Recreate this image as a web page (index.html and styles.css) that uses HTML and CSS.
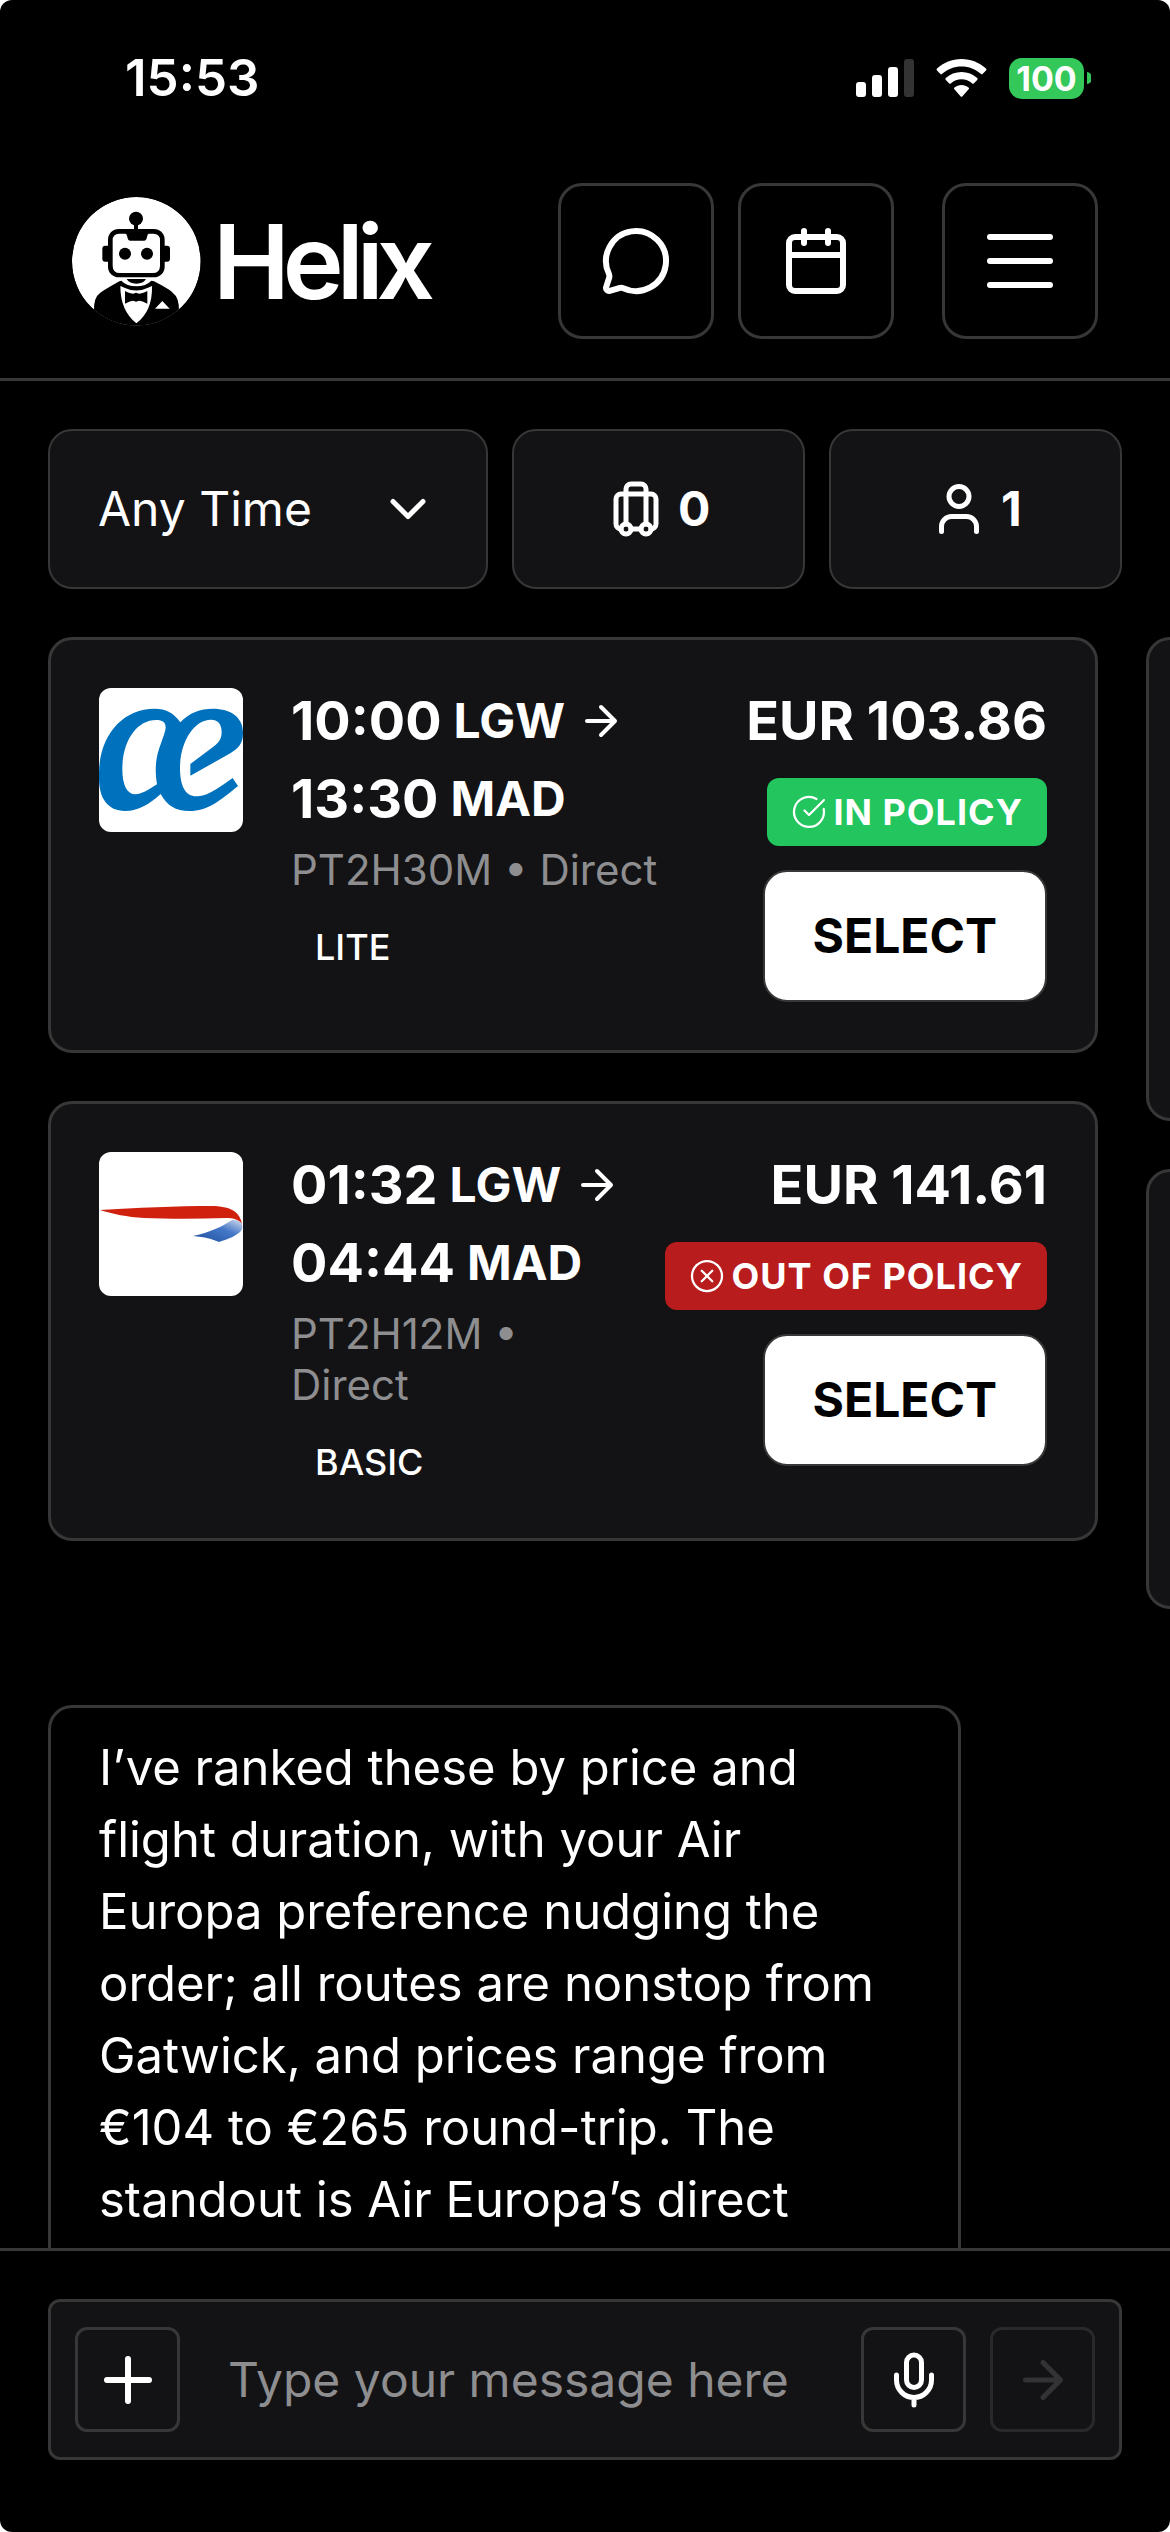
FILE: index.html
```html
<!DOCTYPE html>
<html lang="en">
<head>
<meta charset="utf-8">
<meta name="viewport" content="width=device-width, initial-scale=1">
<title>Helix</title>
<link rel="stylesheet" href="styles.css">
</head>
<body>
<div class="app">
  <div class="status">
    <span class="status-time">15:53</span>
    <div class="status-icons">
      <svg width="58" height="38" viewBox="0 0 58 38" aria-hidden="true">
        <rect x="0" y="23" width="10" height="15" rx="3" fill="#fff"/>
        <rect x="16" y="16" width="10" height="22" rx="3" fill="#fff"/>
        <rect x="32" y="8" width="10" height="30" rx="3" fill="#fff"/>
        <rect x="48" y="0" width="10" height="38" rx="3" fill="#333"/>
      </svg>
      <svg width="51" height="38" viewBox="0 0 51 38" fill="#fff" aria-hidden="true">
        <path d="M25.500 0C35 0 43.500 3.600 50 9.500q1 1 0 2l-3.200 3.300q-1 1-2 0C39.500 10 33 7.400 25.500 7.400S11.500 10 6.200 14.800q-1 1-2 0L1 11.500q-1-1 0-2C7.500 3.600 16 0 25.500 0z"/>
        <path d="M25.500 13c6 0 11.500 2.300 15.700 6q1 1 0 2L38 24.300q-1 1-2 0c-3-2.500-6.500-4-10.500-4s-7.500 1.500-10.500 4q-1 1-2 0L9.800 21q-1-1 0-2c4.200-3.700 9.700-6 15.700-6z"/>
        <path d="M25.500 26c2.700 0 5 .9 7 2.400q1 .9.100 1.900L26.500 37.200q-1 1-2 0l-6.100-6.900q-.9-1 .1-1.900c2-1.500 4.300-2.400 7-2.400z"/>
      </svg>
      <div class="battery"><span class="battery-level">100</span><svg width="4" height="12" viewBox="0 0 4 12" aria-hidden="true"><path d="M0 0a5 6 0 0 1 0 12z" fill="#34c759"/></svg></div>
    </div>
  </div>

  <header class="topbar">
    <a class="brand" href="#">
      <svg width="129" height="129" viewBox="18 18 387 387" aria-hidden="true">
        <clipPath id="disc"><circle cx="211" cy="211" r="193"/></clipPath>
        <g clip-path="url(#disc)">
          <circle cx="211" cy="211" r="193" fill="#fff"/>
          <circle cx="210" cy="83" r="21"/>
          <path d="M204 98h12v20h-12z"/>
          <rect x="109" y="164" width="30" height="48" rx="9"/>
          <rect x="283" y="164" width="29" height="48" rx="9"/>
          <rect x="126" y="114" width="170" height="145" rx="32"/>
          <path d="M160 128h18q4 0 5 6l2 8q1 7 7 7h43q6 0 7-7l2-8q1-6 5-6h13q20 0 20 20v76q0 22-22 22H162q-22 0-22-22v-76q0-20 20-20z" fill="#fff"/>
          <circle cx="177" cy="188" r="18"/><circle cx="243" cy="188" r="18"/>
          <path d="M182 264h58q-8 14-29 14t-29-14z"/>
          <path d="M84 362q-2-42 18-56 12-9 58-35l6-2q16 17 45 17t45-17l8 2q48 25 56 34 20 14 19 56v44H84z"/>
          <path d="M163 285l12 5q36 17 71 0l12-5q2 75-47 112-48-38-48-112z" fill="#fff"/>
          <path d="M177 300q16 8 25 8l8-3 9 3q9 0 25-8v38q-16-9-25-9l-9 3-8-3q-9 0-25 9z"/>
          <path d="M267 353l22-23 22 23z" fill="#fff"/>
        </g>
      </svg>
      <span class="brand-name">Helix</span>
    </a>
    <nav class="actions">
      <button class="icon-btn" type="button" aria-label="Chat">
        <svg class="icon icon-lg" viewBox="0 0 24 24"><path d="M2.992 16.342a2 2 0 0 1 .094 1.167l-1.065 3.290a1 1 0 0 0 1.236 1.168l3.413-.998a2 2 0 0 1 1.099.092 10 10 0 1 0-4.777-4.719"/></svg>
      </button>
      <button class="icon-btn" type="button" aria-label="Calendar">
        <svg class="icon icon-lg" viewBox="0 0 24 24"><path d="M8 2v4M16 2v4M3 10h18"/><rect x="3" y="4" width="18" height="18" rx="2"/></svg>
      </button>
      <button class="icon-btn menu-btn" type="button" aria-label="Menu">
        <svg class="icon icon-lg" viewBox="0 0 24 24"><path d="M2 4h20M2 12h20M2 20h20"/></svg>
      </button>
    </nav>
  </header>

  <main class="content">
    <div class="filters">
      <div class="select-wrap">
        <select class="filter" aria-label="Departure time"><option>Any Time</option></select>
        <svg class="icon icon-md chevron" viewBox="0 0 24 24"><path d="m6 9 6 6 6-6"/></svg>
      </div>
      <button class="filter count" type="button" aria-label="Bags">
        <svg class="icon icon-md" viewBox="0 0 24 24"><path d="M6 20a2 2 0 0 1-2-2V8a2 2 0 0 1 2-2h12a2 2 0 0 1 2 2v10a2 2 0 0 1-2 2"/><path d="M8 18V4a2 2 0 0 1 2-2h4a2 2 0 0 1 2 2v14M10 20h4"/><circle cx="16" cy="20" r="2"/><circle cx="8" cy="20" r="2"/></svg>
        <span>0</span>
      </button>
      <button class="filter count" type="button" aria-label="Passengers">
        <svg class="icon icon-md" viewBox="0 0 24 24"><path d="M19 21v-2a4 4 0 0 0-4-4H9a4 4 0 0 0-4 4v2"/><circle cx="12" cy="7" r="4"/></svg>
        <span>1</span>
      </button>
    </div>

    <div class="results">
      <div class="column">
        <article class="card">
          <svg class="airline" viewBox="9 9 432 432" role="img" aria-label="Air Europa">
            <path fill="#0071bc" fill-rule="evenodd" d="M9 262C11 150 80 71 176 71c33 0 57 12 77 41 27-29 60-41 97-41 55 0 91 26 91 72 0 34-14 45-38 62L283 272v-35l64-48c20-14 30-26 30-48 0-25-12-37-32-37-52 0-93 68-93 145 0 55 17 85 49 85 29 0 55-16 109-55l16 24C370 348 335 378 281 378c-43 0-68-16-87-51-35 31-66 51-107 51C35 378 9 340 9 280zM181 105c-60 0-102 65-102 147 0 48 14 76 39 76 18 0 38-13 65-30-8-50-3-84 12-123 8-23 14-38 14-48 0-15-10-22-28-22z"/>
          </svg>
          <div class="trip">
            <div class="legs">
              <div class="leg"><b>10:00</b> <span>LGW</span><svg class="icon icon-sm" viewBox="0 0 24 24"><path d="M5 12h14M12 5l7 7-7 7"/></svg></div>
              <div class="leg"><b>13:30</b> <span>MAD</span></div>
            </div>
            <p class="detail">PT2H30M • Direct</p>
            <span class="fare">LITE</span>
          </div>
          <div class="offer">
            <div class="price">EUR 103.86</div>
            <div class="policy policy-in"><svg class="icon icon-xs" viewBox="0 0 24 24"><path d="M21.800 10A10 10 0 1 1 17 3.300M9 11l3 3L22 4"/></svg>IN POLICY</div>
            <button class="select-btn" type="button">SELECT</button>
          </div>
        </article>
        <article class="card">
          <svg class="airline" viewBox="0 0 144 144" role="img" aria-label="British Airways">
            <linearGradient id="ribbon" x1="1" y1="0" x2="0" y2="1"><stop offset="0" stop-color="#d5dcec"/><stop offset=".4" stop-color="#4478c8"/><stop offset="1" stop-color="#1f4f9e"/></linearGradient>
            <path fill="#d0210f" d="M1 58C35 56 80 54 112 54c20 0 29 6 31 18-4-5-9-6-16-6-28 1-58 1-82 0C28 65 14 62 1 58z"/>
            <path fill="url(#ribbon)" d="M94 84c18-4 30-10 39-16 6 0 9 2 10 4 1 3 0 6-2 8-5 4-11 7-21 10-7-3-14-5-26-6z"/>
          </svg>
          <div class="trip">
            <div class="legs">
              <div class="leg"><b>01:32</b> <span>LGW</span><svg class="icon icon-sm" viewBox="0 0 24 24"><path d="M5 12h14M12 5l7 7-7 7"/></svg></div>
              <div class="leg"><b>04:44</b> <span>MAD</span></div>
            </div>
            <p class="detail">PT2H12M • Direct</p>
            <span class="fare">BASIC</span>
          </div>
          <div class="offer">
            <div class="price">EUR 141.61</div>
            <div class="policy policy-out"><svg class="icon icon-xs" viewBox="0 0 24 24"><circle cx="12" cy="12" r="10"/><path d="m15.500 8.500-7 7M8.500 8.500l7 7"/></svg>OUT OF POLICY</div>
            <button class="select-btn" type="button">SELECT</button>
          </div>
        </article>
      </div>
      <div class="column column-next">
        <article class="card"></article>
        <article class="card"></article>
      </div>
    </div>

    <div class="message">I’ve ranked these by price and flight duration, with your Air Europa preference nudging the order; all routes are nonstop from Gatwick, and prices range from €104 to €265 round-trip. The standout is Air Europa’s direct</div>
  </main>

  <footer class="composer">
    <form class="composer-box">
      <button class="tool-btn" type="button" aria-label="Add attachment"><svg class="icon icon-lg" viewBox="0 0 24 24"><path d="M5 12h14M12 5v14"/></svg></button>
      <input class="composer-input" type="text" placeholder="Type your message here" aria-label="Message">
      <button class="tool-btn" type="button" aria-label="Dictate"><svg class="icon icon-md" viewBox="0 0 24 24"><path d="M12 19v3M19 10v2a7 7 0 0 1-14 0v-2"/><rect x="9" y="2" width="6" height="13" rx="3"/></svg></button>
      <button class="tool-btn" type="submit" aria-label="Send" disabled><svg class="icon icon-md" viewBox="0 0 24 24"><path d="M5 12h14M12 5l7 7-7 7"/></svg></button>
    </form>
  </footer>
</div>
</body>
</html>
```
FILE: styles.css
```css
:root {
  --line: #373737;
  --panel: #131315;
  --muted: #8e8e90;
}

* { box-sizing: border-box; }

html { background: #fff; }

body {
  margin: 0;
  color: #fff;
  font-family: Inter, "Liberation Sans", sans-serif;
  font-size: 48px;
  line-height: 60px;
}

button, input, select {
  margin: 0;
  font: inherit;
  color: inherit;
}

.app {
  display: flex;
  flex-direction: column;
  height: 100vh;
  overflow: hidden;
  border-radius: 12px;
  background: #000;
}

.icon {
  display: block;
  flex: none;
  fill: none;
  stroke: currentColor;
  stroke-width: 2;
  stroke-linecap: round;
  stroke-linejoin: round;
}
.icon-lg { width: 72px; height: 72px; }
.icon-md { width: 60px; height: 60px; }
.icon-sm { width: 48px; height: 48px; }
.icon-xs { width: 36px; height: 36px; stroke-width: 1.5; }

/* Status bar */
.status {
  display: flex;
  flex: none;
  align-items: center;
  justify-content: space-between;
  height: 144px;
  padding: 12px 79px 0 125px;
}
.status-time { font-size: 51px; font-weight: 600; }
.status-icons { display: flex; align-items: center; gap: 22px; }
.battery { display: flex; align-items: center; gap: 3px; }
.battery-level {
  width: 75px;
  border-radius: 13px;
  background: #34c759;
  font-size: 34px;
  font-weight: 700;
  line-height: 41px;
  text-align: center;
}

/* Header */
.topbar {
  display: flex;
  flex: none;
  align-items: center;
  justify-content: space-between;
  padding: 39px 72px;
  border-bottom: 3px solid var(--line);
}
.brand {
  display: flex;
  align-items: center;
  gap: 12px;
  color: inherit;
  text-decoration: none;
}
.brand-name {
  font-size: 103px;
  font-weight: 600;
  line-height: 129px;
  letter-spacing: -7px;
}
.actions { display: flex; gap: 24px; }
.icon-btn {
  display: grid;
  place-items: center;
  width: 156px;
  height: 156px;
  padding: 0;
  border: 3px solid var(--line);
  border-radius: 24px;
  background: none;
}
.menu-btn { margin-left: 24px; }

/* Content */
.content {
  flex: 1;
  min-height: 0;
  overflow: hidden;
  padding: 48px 48px 0;
}
.filters {
  display: grid;
  grid-template-columns: 3fr 2fr 2fr;
  gap: 24px;
}
.filter {
  width: 100%;
  height: 160px;
  padding: 0 48px;
  border: 2px solid var(--line);
  border-radius: 24px;
  background: var(--panel);
}
.select-wrap { position: relative; }
.select-wrap .filter { appearance: none; }
.chevron {
  position: absolute;
  top: 50px;
  right: 50px;
  pointer-events: none;
}
.count {
  display: flex;
  align-items: center;
  justify-content: center;
  gap: 12px;
  font-weight: 700;
}

/* Flight results */
.results {
  display: flex;
  gap: 48px;
  margin-top: 48px;
}
.column {
  display: flex;
  flex: none;
  flex-direction: column;
  gap: 48px;
  width: calc(100% - 24px);
}
.card {
  display: flex;
  align-items: flex-start;
  gap: 48px;
  padding: 48px;
  border: 3px solid var(--line);
  border-radius: 24px;
  background: var(--panel);
}
.column-next .card { min-height: 440px; }
.column-next .card:first-child { min-height: 484px; }
.airline {
  flex: none;
  width: 144px;
  height: 144px;
  border-radius: 12px;
  background: #fff;
}
.trip {
  display: flex;
  flex: 1;
  flex-direction: column;
  align-items: flex-start;
  gap: 12px;
  min-width: 0;
}
.legs { display: flex; flex-direction: column; gap: 12px; }
.leg {
  display: flex;
  align-items: center;
  gap: 12px;
  font-weight: 700;
  line-height: 66px;
}
.leg b { font-size: 54px; font-weight: 700; }
.detail {
  margin: 0;
  color: var(--muted);
  font-size: 42px;
  line-height: 51px;
}
.fare {
  margin-top: 12px;
  padding: 6px 24px;
  font-size: 36px;
  font-weight: 500;
  line-height: 44px;
}
.offer {
  display: flex;
  flex: none;
  flex-direction: column;
  align-items: flex-end;
  gap: 24px;
}
.price {
  font-size: 54px;
  font-weight: 700;
  line-height: 66px;
}
.policy {
  display: flex;
  align-items: center;
  gap: 6px;
  padding: 12px 24px;
  border-radius: 12px;
  font-size: 36px;
  font-weight: 700;
  line-height: 44px;
  letter-spacing: 1px;
  white-space: nowrap;
}
.policy-in { background: #22c55e; }
.policy-out { background: #b91c1c; }
.select-btn {
  height: 132px;
  padding: 0 48px;
  border: 2px solid var(--line);
  border-radius: 24px;
  background: #fff;
  color: #000;
  font-weight: 700;
}

/* Assistant message */
.message {
  width: 85%;
  margin-top: 96px;
  padding: 24px 48px 48px;
  border: 3px solid var(--line);
  border-radius: 24px;
  font-size: 49px;
  line-height: 72px;
}

/* Composer */
.composer {
  flex: none;
  padding: 48px 48px 72px;
  border-top: 3px solid var(--line);
}
.composer-box {
  display: flex;
  align-items: center;
  gap: 24px;
  padding: 25px 24px;
  border: 3px solid var(--line);
  border-radius: 12px;
  background: var(--panel);
}
.composer-input {
  flex: 1;
  min-width: 0;
  padding: 0 24px;
  border: 0;
  outline: 0;
  background: none;
}
.composer-input::placeholder { color: var(--muted); opacity: 1; }
.tool-btn {
  display: grid;
  flex: none;
  place-items: center;
  width: 105px;
  height: 105px;
  padding: 0;
  border: 3px solid var(--line);
  border-radius: 12px;
  background: none;
}
.tool-btn:disabled { border-color: #29292b; color: #333335; }
```
